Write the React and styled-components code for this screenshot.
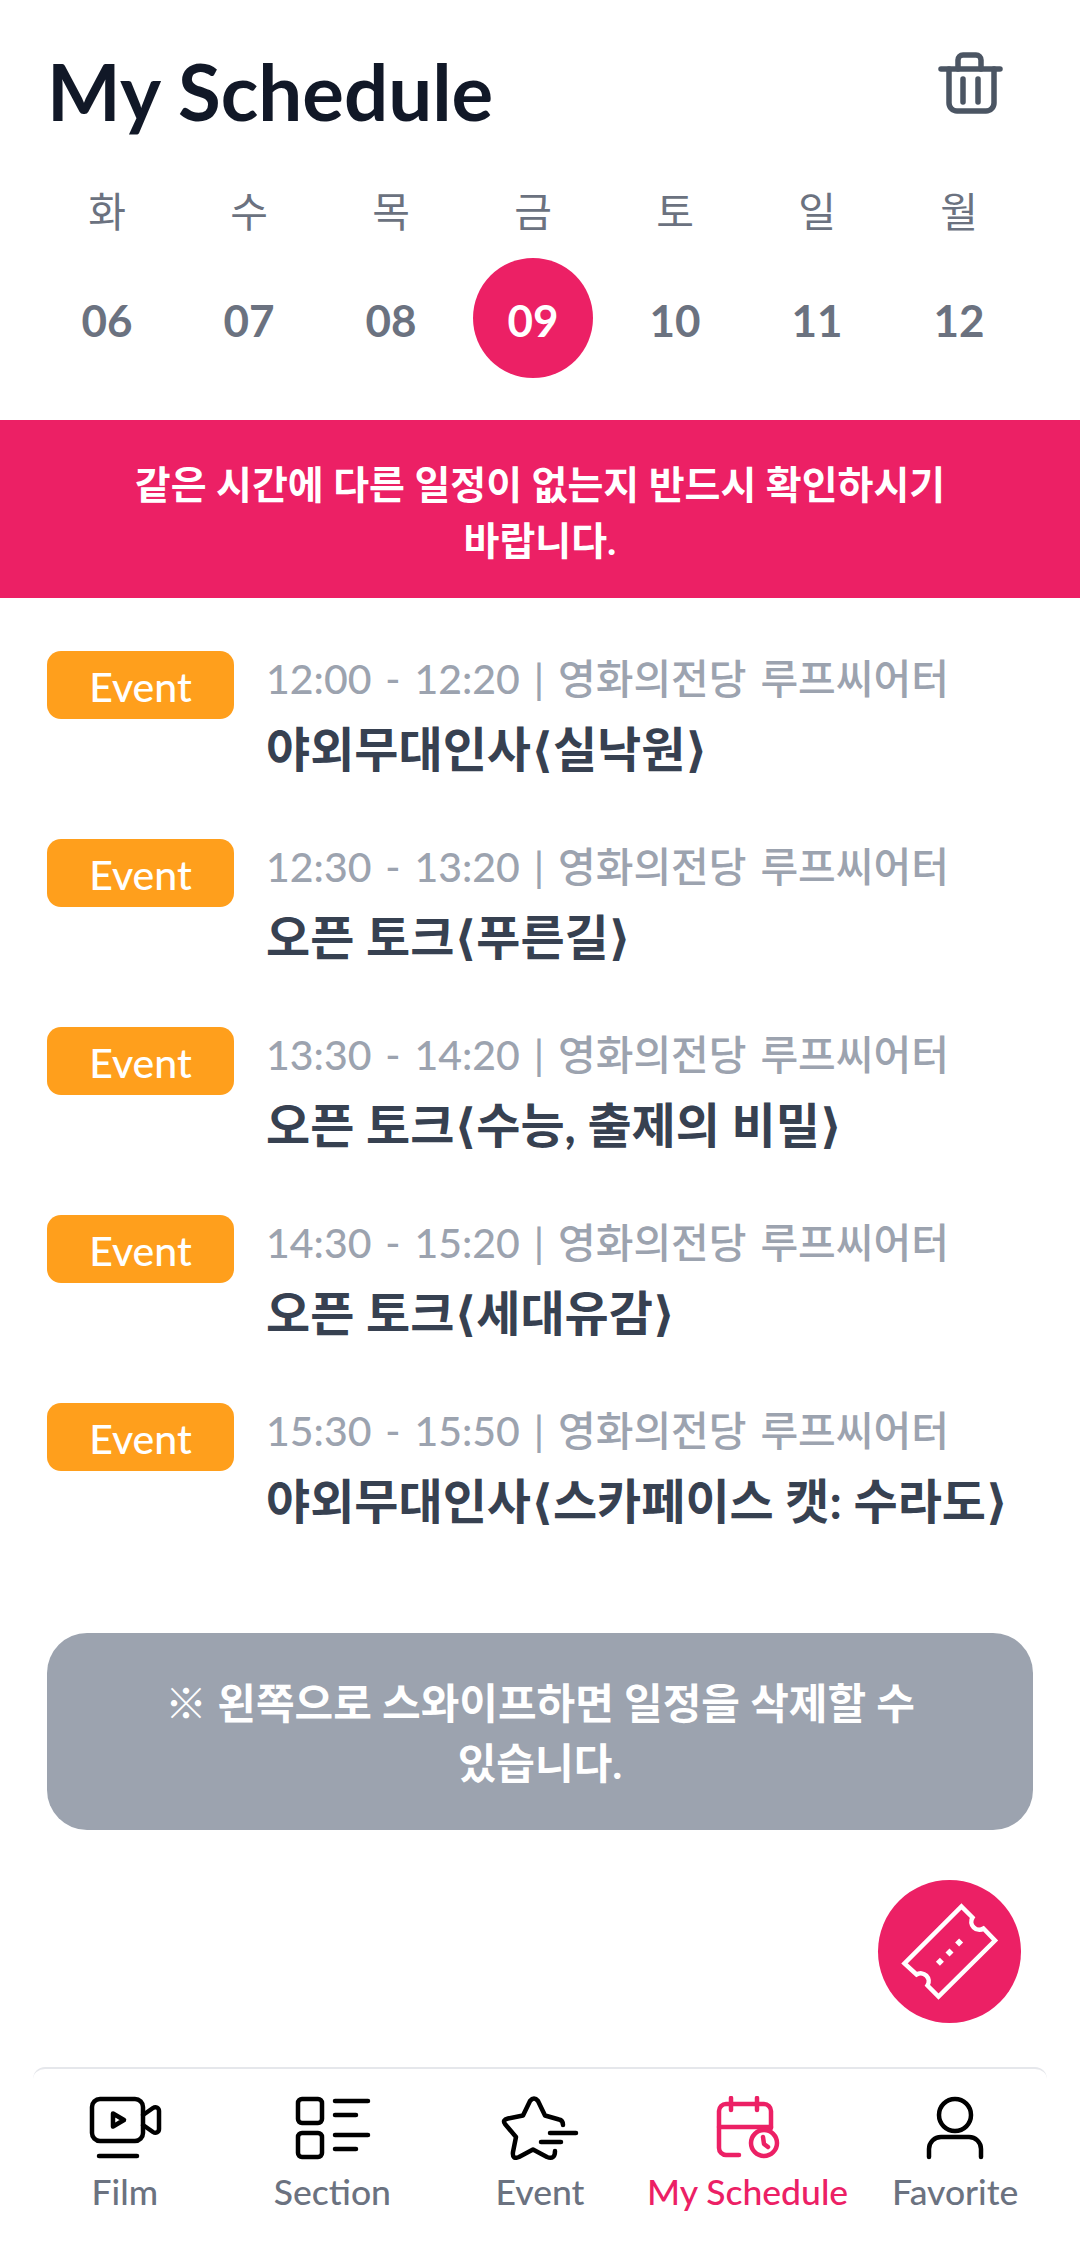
import React from 'react'
import styled, { createGlobalStyle } from 'styled-components'

const Global = createGlobalStyle`
  html, body { margin: 0; padding: 0; background: #fff; }
  body { font-family: "Lato", "Noto Sans CJK KR", "DejaVu Sans", sans-serif; }
  * { box-sizing: border-box; }
`

const Page = styled.div`
  width: 1080px;
  height: 2249px;
  overflow: hidden;
  background: #fff;
`

const Header = styled.div`
  height: 182px;
  padding: 0 47px;
  display: flex;
  justify-content: space-between;
  align-items: center;
`

const Title = styled.h1`
  margin: 0;
  font-size: 78px;
  font-weight: 700;
  color: #111827;
`

const TrashButton = styled.div`
  width: 66px;
  height: 66px;
  margin-right: 29px;
  margin-top: -16px;
`

const Week = styled.div`
  padding: 0 50px 0 36px;
  display: grid;
  grid-template-columns: repeat(7, 1fr);
  justify-items: center;
  margin-bottom: 42px;
`

const DayName = styled.div`
  height: 60px;
  margin-bottom: 16px;
  font-size: 41px;
  line-height: 60px;
  color: #6b7280;
`

const DayNumber = styled.div`
  width: 120px;
  height: 120px;
  border-radius: 50%;
  padding-top: 4px;
  display: flex;
  align-items: center;
  justify-content: center;
  font-size: 44px;
  font-weight: 700;
  color: ${p => (p.$active ? '#fff' : '#6b7280')};
  background: ${p => (p.$active ? '#ec2065' : 'transparent')};
`

const Banner = styled.div`
  height: 178px;
  padding-top: 6px;
  background: #ec2065;
  display: flex;
  align-items: center;
  justify-content: center;
  text-align: center;
  color: #fff;
  font-size: 39px;
  line-height: 56px;
  font-weight: 700;
`

const BannerText = styled.div`
  width: 840px;
  word-break: keep-all;
`

const List = styled.div`
  padding: 53px 47px 0;
  display: flex;
  flex-direction: column;
  gap: 62px;
`

const Row = styled.div`
  display: flex;
  gap: 32px;
`

const Badge = styled.div`
  width: 187px;
  height: 68px;
  flex: none;
  padding-top: 3px;
  border-radius: 14px;
  background: #ff9f1c;
  color: #fff;
  font-size: 41px;
  font-weight: 500;
  display: flex;
  align-items: center;
  justify-content: center;
`

const Info = styled.div`
  display: flex;
  flex-direction: column;
  gap: 14px;
  white-space: nowrap;
`

const Time = styled.div`
  font-size: 41px;
  line-height: 56px;
  font-weight: 500;
  word-spacing: 3.5px;
  color: #9ca3af;
`

const EventName = styled.div`
  font-size: 48px;
  line-height: 56px;
  font-weight: 700;
  color: #374151;
`

const Note = styled.div`
  margin: 104px 47px 0;
  height: 197px;
  padding-top: 2px;
  border-radius: 40px;
  background: #9ca3af;
  display: flex;
  align-items: center;
  justify-content: center;
  text-align: center;
  color: #fff;
  font-size: 42px;
  line-height: 60px;
  font-weight: 700;
`

const NoteText = styled.div`
  width: 800px;
  word-break: keep-all;
`

const FabRow = styled.div`
  margin-top: 50px;
  padding-right: 59px;
  display: flex;
  justify-content: flex-end;
`

const Fab = styled.div`
  width: 143px;
  height: 143px;
  border-radius: 50%;
  background: #ec2065;
`

const Divider = styled.div`
  margin: 44px 33px 0;
  height: 12px;
  border-top: 2px solid #e5e7eb;
  border-radius: 14px 14px 0 0;
`

const Nav = styled.div`
  padding: 17px 21px 0;
  display: grid;
  grid-template-columns: repeat(5, 1fr);
`

const NavItem = styled.div`
  display: flex;
  flex-direction: column;
  align-items: center;
  white-space: nowrap;
  font-size: 35.500px;
  line-height: 44px;
  font-weight: 500;
  color: ${p => (p.$active ? '#ec2065' : '#6b7280')};
`

const NavIcon = styled.svg`
  width: 84px;
  height: 64px;
  margin-bottom: 10px;
  fill: none;
  stroke: ${p => (p.$active ? '#ec2065' : '#000')};
  stroke-width: 4.5;
  stroke-linecap: round;
  stroke-linejoin: round;
`

const days = [
  ['화', '06'], ['수', '07'], ['목', '08'], ['금', '09'],
  ['토', '10'], ['일', '11'], ['월', '12'],
]

const events = [
  ['12:00 - 12:20 | 영화의전당 루프씨어터', '야외무대인사⟨실낙원⟩'],
  ['12:30 - 13:20 | 영화의전당 루프씨어터', '오픈 토크⟨푸른길⟩'],
  ['13:30 - 14:20 | 영화의전당 루프씨어터', '오픈 토크⟨수능, 출제의 비밀⟩'],
  ['14:30 - 15:20 | 영화의전당 루프씨어터', '오픈 토크⟨세대유감⟩'],
  ['15:30 - 15:50 | 영화의전당 루프씨어터', '야외무대인사⟨스카페이스 캣: 수라도⟩'],
]

const TrashIcon = () => (
  <svg width="66" height="66" viewBox="0 0 66 66" fill="none" stroke="#4b5563" strokeWidth="5.5" strokeLinecap="round" strokeLinejoin="round">
    <path d="M3 19h59" />
    <path d="M20 19V10a5 5 0 0 1 5-5h13a5 5 0 0 1 5 5v9" />
    <path d="M11 19v34a8 8 0 0 0 8 8h29a8 8 0 0 0 8-8V19" />
    <path d="M25 29v23M40 29v23" />
  </svg>
)

const TicketIcon = () => (
  <svg width="143" height="143" viewBox="-71.5 -71.5 143 143" fill="none" stroke="#fff" strokeWidth="4.5">
    <path d="M12 -45L23 -34A8 8 0 0 0 34 -23L45.500 -11L-11 45L-22 34A8 8 0 0 0 -33 23L-45 12Z" />
    <path d="M9.600 -13L13.600 -9L9.600 -5L5.600 -9ZM0 -3L4 1L0 5L-4 1ZM-9.600 6.300L-5.600 10.300L-9.600 14.300L-13.600 10.300Z" fill="#fff" stroke="none" />
  </svg>
)

const FilmIcon = () => (
  <NavIcon viewBox="-7 0 84 64">
    <rect x="2" y="3" width="51" height="42" rx="8" />
    <path d="M53 19l10-7c3-2 6 0 6 3v18c0 3-3 5-6 3l-10-7" />
    <path d="M23 17.500l11 6.500-11 6.500z" />
    <path d="M9 60h38" />
  </NavIcon>
)

const SectionIcon = () => (
  <NavIcon viewBox="-6 0 84 64">
    <rect x="2" y="3" width="24" height="24" rx="4" />
    <rect x="2" y="37" width="24" height="24" rx="4" />
    <path d="M39 5h33M39 19h21M39 39h33M39 53h21" />
  </NavIcon>
)

const StarIcon = () => (
  <NavIcon viewBox="0 0 84 64">
    <path d="M65 29C65 26 64 24 61 23.500L47 19.500L40 5Q36 0 32 5L25 19.500L10 22.500Q4 24 7 28L18 41L15 56Q14 64 21 61L35 53.500L49 61Q57 64 57 55" />
    <path d="M52 37h26M43 46h20" />
  </NavIcon>
)

const CalendarIcon = () => (
  <NavIcon viewBox="-11 0 84 64" $active>
    <path d="M22 59H9a7 7 0 0 1-7-7V15a7 7 0 0 1 7-7h38a7 7 0 0 1 7 7v17" />
    <path d="M2 31h52M14 2v12M40 2v12" />
    <circle cx="47" cy="47" r="13" />
    <path d="M46 41l1 7 4 3" />
  </NavIcon>
)

const PersonIcon = () => (
  <NavIcon viewBox="-14 0 84 64">
    <circle cx="28" cy="19" r="16" />
    <path d="M2 61V53a12 12 0 0 1 12-12h28a12 12 0 0 1 12 12v8" />
  </NavIcon>
)

const tabs = [
  ['Film', FilmIcon],
  ['Section', SectionIcon],
  ['Event', StarIcon],
  ['My Schedule', CalendarIcon],
  ['Favorite', PersonIcon],
]

export default function App() {
  return (
    <Page>
      <Global />
      <Header>
        <Title>My Schedule</Title>
        <TrashButton><TrashIcon /></TrashButton>
      </Header>
      <Week>
        {days.map(([name]) => <DayName key={name}>{name}</DayName>)}
        {days.map(([name, num]) => (
          <DayNumber key={num} $active={name === '금'}>{num}</DayNumber>
        ))}
      </Week>
      <Banner>
        <BannerText>같은 시간에 다른 일정이 없는지 반드시 확인하시기 바랍니다.</BannerText>
      </Banner>
      <List>
        {events.map(([time, name]) => (
          <Row key={time}>
            <Badge>Event</Badge>
            <Info>
              <Time>{time}</Time>
              <EventName>{name}</EventName>
            </Info>
          </Row>
        ))}
      </List>
      <Note>
        <NoteText>※ 왼쪽으로 스와이프하면 일정을 삭제할 수 있습니다.</NoteText>
      </Note>
      <FabRow>
        <Fab><TicketIcon /></Fab>
      </FabRow>
      <Divider />
      <Nav>
        {tabs.map(([label, Icon]) => (
          <NavItem key={label} $active={label === 'My Schedule'}>
            <Icon />
            {label}
          </NavItem>
        ))}
      </Nav>
    </Page>
  )
}
